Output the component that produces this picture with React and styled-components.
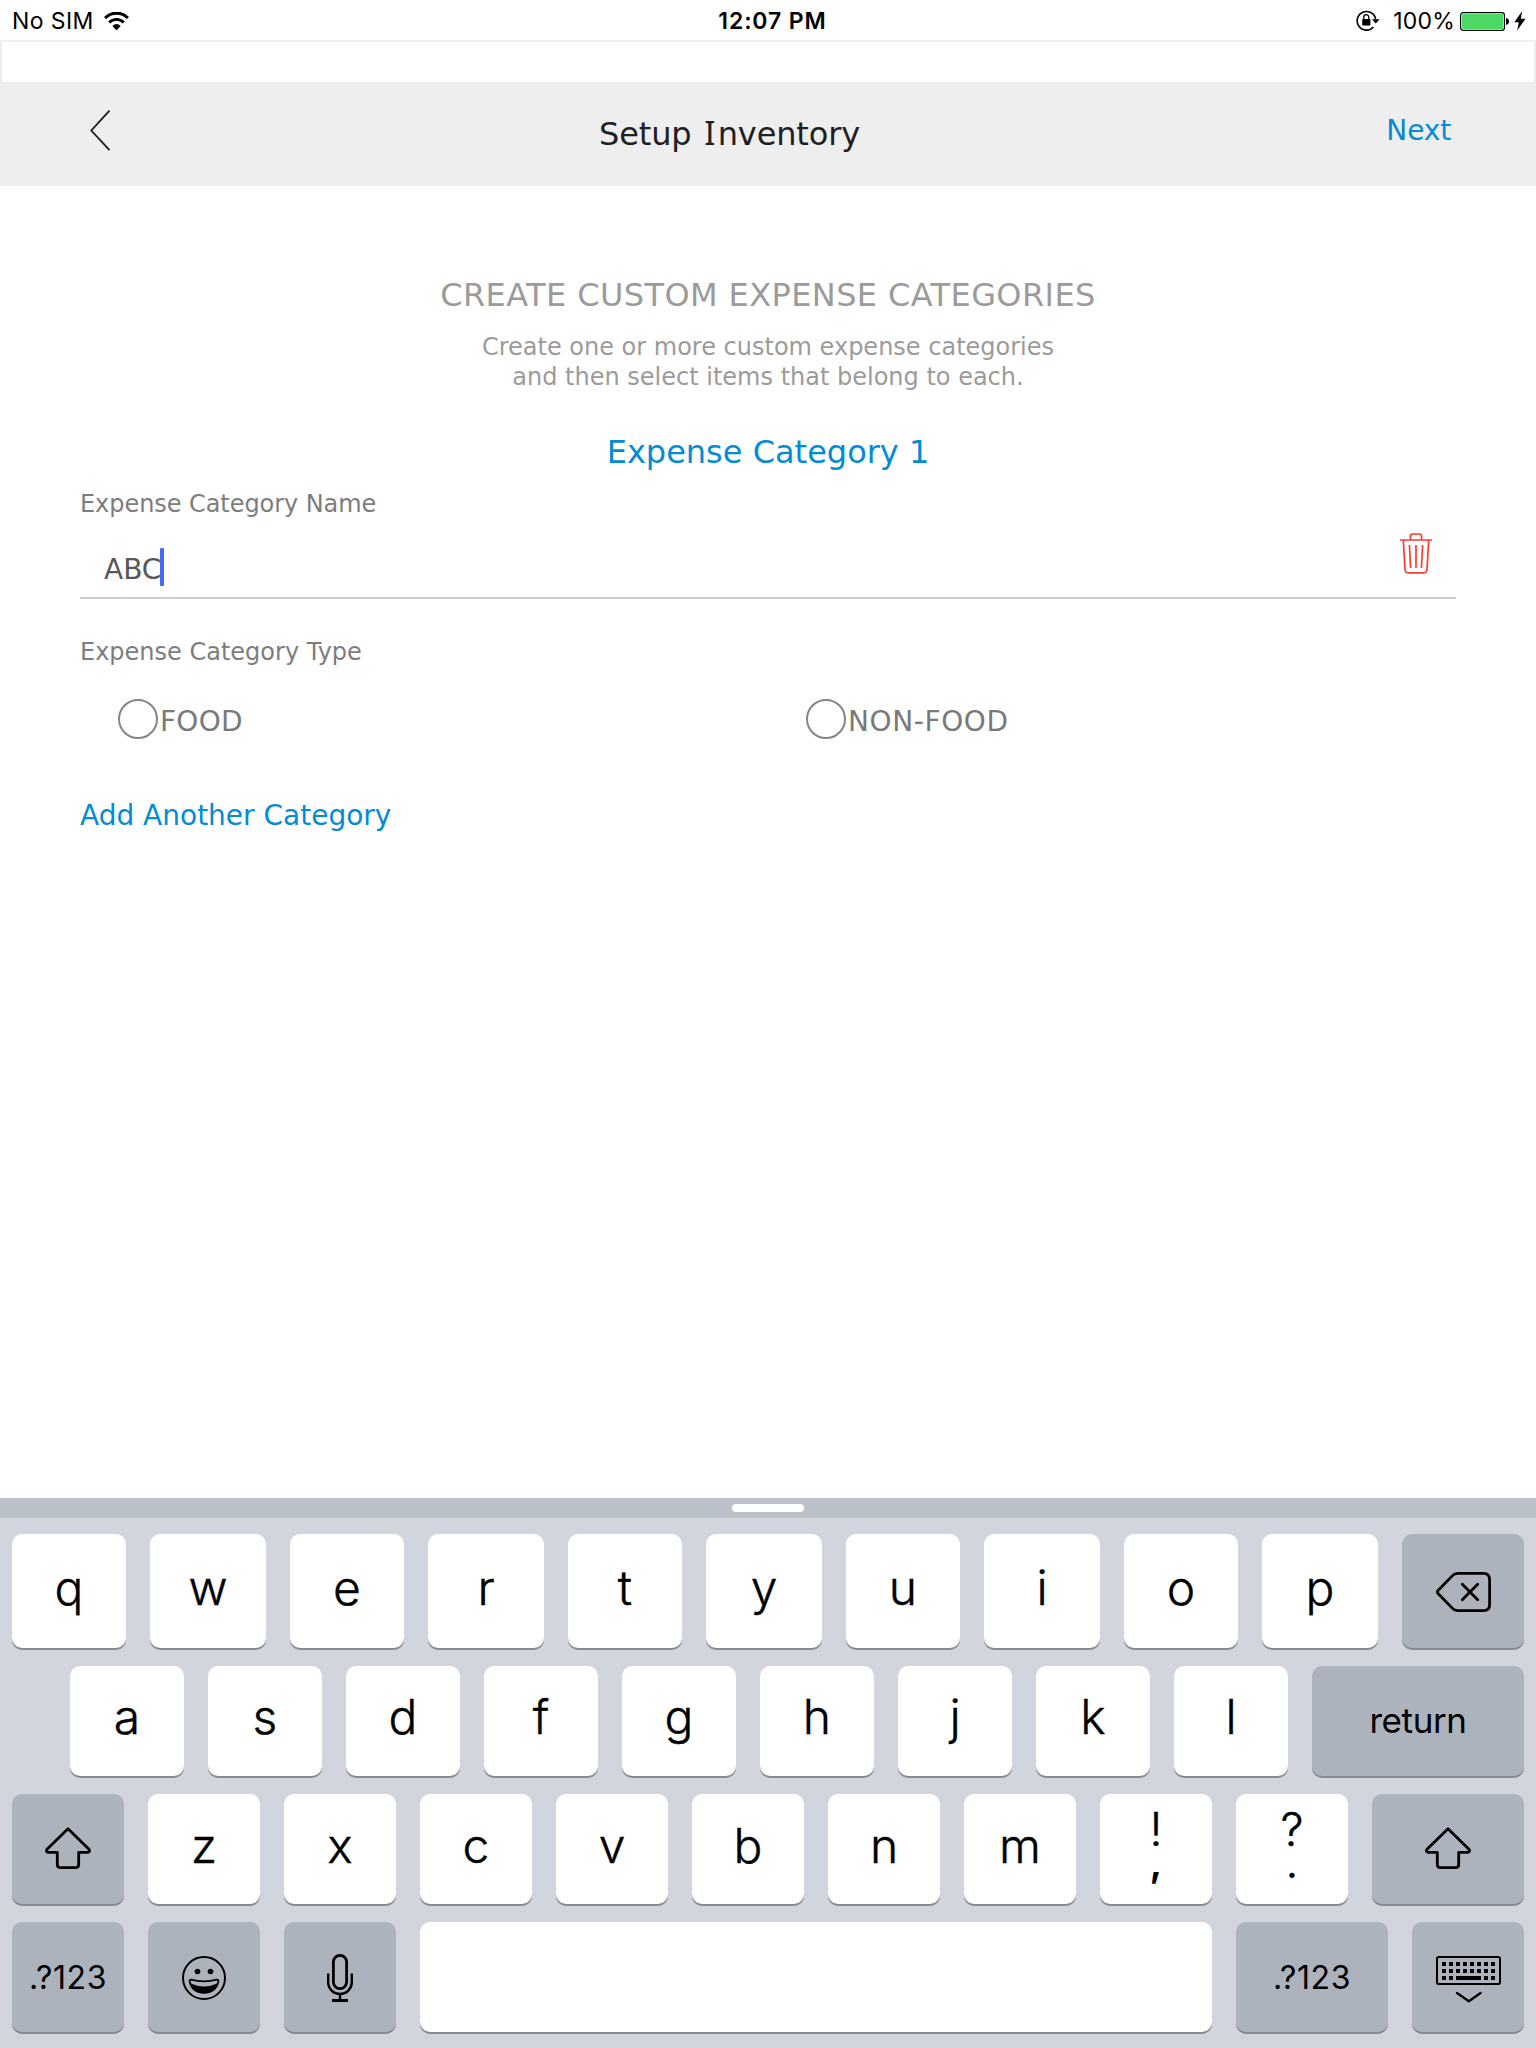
import React from "react";
import styled, { createGlobalStyle } from "styled-components";

const GlobalStyle = createGlobalStyle`
  * { box-sizing: border-box; }
  body { margin: 0; background: #fff; }
  svg { display: block; flex: none; }
`;

const sans = `"DejaVu Sans", Verdana, sans-serif`;
const system = `Inter, "Liberation Sans", sans-serif`;

const Page = styled.div`
  width: 1536px;
  height: 2048px;
  display: flex;
  flex-direction: column;
  background: #fff;
  font-family: ${sans};
  overflow: hidden;
`;

/* Status bar */
const StatusBar = styled.div`
  height: 40px;
  display: grid;
  grid-template-columns: 1fr auto 1fr;
  align-items: center;
  padding: 1px 10px 0 12px;
  font: 400 23px/40px ${system};
  color: #000;
`;
const StatusLeft = styled.div`
  display: flex;
  align-items: center;
  gap: 10px;
  letter-spacing: 0.42px;
`;
const StatusTime = styled.div`
  font-weight: 600;
  letter-spacing: 0.9px;
  padding-left: 7px;
`;
const StatusRight = styled.div`
  display: flex;
  align-items: center;
  justify-content: flex-end;
`;
const Percent = styled.span`
  margin: 0 5px 0 13px;
  letter-spacing: 0.2px;
`;
const Charging = styled.span`
  padding-left: 4px;
`;

/* Header */
const EmptyBar = styled.div`
  height: 42px;
  border: 2px solid #eee;
  border-bottom: 0;
`;
const Header = styled.header`
  height: 104px;
  display: flex;
  align-items: center;
  background: #eee;
`;
const BackButton = styled.div`
  width: 110px;
  padding: 0 0 7px 90px;
`;
const Title = styled.div`
  flex: 1;
  text-align: center;
  font-size: 32px;
  line-height: 40px;
  letter-spacing: -0.15px;
  color: #1f2023;
  white-space: nowrap;
`;
const SerifCapital = styled.span`
  font: 33px/1 "Noto Sans", sans-serif;
  margin: 0 2.5px 0 2.7px;
`;
const NextLink = styled.div`
  width: 187px;
  padding: 0 85px 6px 0;
  text-align: right;
  font-size: 28px;
  line-height: 40px;
  letter-spacing: -0.15px;
  color: #038bd4;
`;

/* Form */
const Content = styled.main`
  flex: 1;
  padding: 89px 80px 0;
`;
const Heading = styled.h1`
  margin: 0 0 17px;
  text-align: center;
  font-size: 32px;
  font-weight: 400;
  line-height: 40px;
  letter-spacing: 0.4px;
  color: #9b9b9b;
`;
const Intro = styled.p`
  margin: 0 0 40px;
  text-align: center;
  font-size: 24px;
  line-height: 30px;
  color: #9b9b9b;
`;
const CategoryTitle = styled.h2`
  margin: 0 0 17px;
  text-align: center;
  font-size: 32px;
  font-weight: 400;
  line-height: 40px;
  color: #038bd4;
`;
const Label = styled.div`
  font-size: 24px;
  line-height: 30px;
  letter-spacing: ${(p) => p.$spacing || "0"};
  color: #7d7d7d;
`;
const Field = styled.div`
  height: 80px;
  display: flex;
  align-items: flex-start;
  margin-bottom: 38px;
  padding: 0 24px;
  border-bottom: 2px solid #ccc;
`;
const FieldText = styled.span`
  padding-top: 31px;
  font-size: 28px;
  line-height: 40px;
  color: #575757;
`;
const Caret = styled.span`
  width: 4px;
  height: 38px;
  margin: 29px auto 0 -1px;
  border-radius: 1px;
  background: #426bf2;
`;
const TrashButton = styled.div`
  padding-top: 14px;
`;
const Options = styled.div`
  height: 40px;
  display: flex;
  margin: 32px 0 57px;
`;
const Option = styled.div`
  width: 688px;
  padding-left: 38px;
  display: flex;
  align-items: center;
  font-size: 28px;
  letter-spacing: ${(p) => p.$spacing};
  color: #797979;
`;
const Radio = styled.span`
  width: 40px;
  height: 40px;
  margin-right: 2px;
  border: 2px solid #858585;
  border-radius: 50%;
`;
const OptionText = styled.span`
  line-height: 40px;
  padding-top: 6px;
`;
const AddLink = styled.div`
  font-size: 28px;
  line-height: 40px;
  color: #038bd4;
`;

/* Keyboard */
const Keyboard = styled.div`
  height: 550px;
  background: #d2d5dd;
`;
const Handle = styled.div`
  height: 20px;
  display: flex;
  justify-content: center;
  padding-top: 6px;
  background: #bac1c9;
`;
const Grip = styled.div`
  width: 72px;
  height: 8px;
  border-radius: 4px;
  background: #fff;
`;
const Rows = styled.div`
  display: flex;
  flex-direction: column;
  gap: 18px;
  padding-top: 16px;
`;
const Row = styled.div`
  display: flex;
  gap: 24px;
  height: ${(p) => p.$height || 110}px;
  padding: 0 12px 0 ${(p) => p.$indent || 12}px;
`;
const Key = styled.div`
  width: ${(p) => p.$width}px;
  height: 100%;
  display: flex;
  flex-direction: column;
  align-items: center;
  justify-content: ${(p) => (p.$stacked ? "flex-start" : "center")};
  padding-top: ${(p) => (p.$stacked ? 7 : 0)}px;
  border-radius: 10px;
  background: ${(p) => (p.$dark ? "#adb3bd" : "#fff")};
  box-shadow: 0 2px 0 #898a8d;
  color: #000;
  font-family: ${system};
`;
const Letter = styled.span`
  padding-bottom: ${(p) => p.$raise}px;
  font-size: 48px;
  font-weight: 300;
  line-height: 60px;
  -webkit-text-stroke: 0.4px #000;
`;
const ReturnText = styled.span`
  padding-bottom: 3px;
  font-size: 35px;
  line-height: 44px;
  letter-spacing: -0.4px;
`;
const ModeText = styled.span`
  padding-top: 2px;
  font-size: 32px;
  line-height: 40px;
  letter-spacing: 0.6px;
`;
const UpperMark = styled.span`
  font-size: 46px;
  font-weight: 300;
  line-height: 56px;
  -webkit-text-stroke: 0.4px #000;
`;
const LowerMark = styled.span`
  margin-top: ${(p) => p.$lift}px;
  font-size: ${(p) => p.$size}px;
  font-weight: 600;
  line-height: 30px;
`;
const IconBox = styled.span`
  padding: ${(p) => p.$pad || 0};
`;

const WifiIcon = () => (
  <svg width="26" height="19" viewBox="0 0 26 19" fill="none" stroke="#000">
    <path d="M1.1 6.1a15.6 15.6 0 0 1 22.8 0" strokeWidth="3" />
    <path d="M5.2 10.4a10.2 10.2 0 0 1 14.6 0" strokeWidth="2.8" />
    <path d="M8.3 14Q12.5 10 16.7 14L12.5 18.2z" fill="#000" stroke="none" />
  </svg>
);
const LockIcon = () => (
  <svg width="24" height="22" viewBox="0 0 24 22" fill="none" stroke="#000">
    <path d="M17.4 17A9.3 9.3 0 1 1 19.600 9" strokeWidth="1.600" />
    <path d="M16 9.200h7.600l-3.800 4.200z" fill="#000" stroke="none" />
    <rect x="6.200" y="9" width="8.200" height="6.600" rx="0.800" fill="#000" stroke="none" />
    <path d="M7.800 9V7.200a2.500 2.500 0 0 1 5 0V9" strokeWidth="1.300" />
  </svg>
);
const BatteryIcon = () => (
  <svg width="50" height="19" viewBox="0 0 50 19">
    <rect x="0.6" y="0.6" width="43.8" height="17.8" rx="2.6" fill="#fff" stroke="#000" strokeWidth="1.2" />
    <rect x="2" y="2" width="41" height="15" rx="1" fill="#4cd964" />
    <path d="M46 6c2 .4 3 1.600 3 3.500s-1 3.100-3 3.500z" fill="#000" />
  </svg>
);
const BoltIcon = () => (
  <svg width="12" height="20" viewBox="0 0 12 20">
    <path d="M8.200 0L.3 11.200h4.500L3.200 19.500 11.500 7.700H6.800z" />
  </svg>
);
const BackIcon = () => (
  <svg width="21" height="41" viewBox="0 0 21 41" fill="none" stroke="#1b1b1d" strokeWidth="1.8">
    <path d="M19.500.7L1.300 20.500 19.500 40.200" />
  </svg>
);
const TrashIcon = () => (
  <svg width="32" height="41" viewBox="0 0 32 41" fill="none" stroke="#ff3b30" strokeWidth="1.7">
    <path d="M0 7h32M10.500 7V2.800Q10.500 1 12.300 1h7.400Q21.500 1 21.500 2.800V7" />
    <path d="M3.300 7L5 36.500Q5.300 39.800 8 39.800h16q2.700 0 3-3.300L28.700 7" />
    <path d="M9.400 12L10.600 35M16 12v23M22.600 12L21.400 35" />
  </svg>
);
const DeleteIcon = () => (
  <svg width="56" height="40" viewBox="0 0 56 40" fill="none" stroke="#000" strokeWidth="2.800" strokeLinejoin="round" strokeLinecap="round">
    <path d="M1.800 18.800L16.500 3.600Q18.600 1.400 21.500 1.400H47.500Q53.600 1.400 53.600 7.500V32.500Q53.600 38.600 47.500 38.600H21.500Q18.600 38.600 16.500 36.400L1.800 21.200Q.8 20 1.800 18.800z" />
    <path d="M26.300 12.300l15.400 15.400M41.700 12.300L26.300 27.700" />
  </svg>
);
const ShiftIcon = () => (
  <svg width="46" height="42" viewBox="0 0 46 42" fill="none" stroke="#000" strokeWidth="2.800" strokeLinejoin="round">
    <path d="M23 1.700L44.200 22.600Q45.300 25 43 25.300H33.700V37.600Q33.700 40.600 30.700 40.600H15.300Q12.300 40.600 12.300 37.600V25.300H3Q.7 25 1.800 22.600z" />
  </svg>
);
const EmojiIcon = () => (
  <svg width="44" height="44" viewBox="0 0 44 44" fill="none" stroke="#000">
    <circle cx="22" cy="22" r="21" strokeWidth="2" />
    <circle cx="15.500" cy="15.500" r="2.800" fill="#000" stroke="none" />
    <circle cx="28.500" cy="15.500" r="2.800" fill="#000" stroke="none" />
    <path d="M9 23.600Q22 27.200 35 23.600 36.800 23.600 36.300 26 33.500 36.800 22 36.800T7.700 26Q7.200 23.600 9 23.600z" strokeWidth="1.800" />
    <path d="M8.800 27.500Q22 33.600 35.200 27.500 32 36.500 22 36.500T8.800 27.500z" fill="#000" stroke="none" />
  </svg>
);
const MicIcon = () => (
  <svg width="26" height="48" viewBox="0 0 26 48" fill="none" stroke="#000">
    <rect x="6.400" y="1.400" width="13.200" height="33.200" rx="6.600" strokeWidth="2.800" />
    <path d="M1.200 19.500v8.700a11.800 11.800 0 0 0 23.600 0v-8.700" strokeWidth="2.400" />
    <path d="M13 40v6" strokeWidth="2.400" />
    <path d="M5 46.500h16" strokeWidth="3" />
  </svg>
);
const gridRows = [
  [6, 13, 20, 27, 34, 41, 48, 55].map((x) => [x, 6]),
  [6, 13, 20, 27, 34, 41, 48, 55].map((x) => [x, 13]),
  [6, 13, 48, 55].map((x) => [x, 20]),
].flat();
const HideKeyboardIcon = () => (
  <svg width="65" height="47" viewBox="0 0 65 47">
    <rect x="1" y="1" width="63" height="27" rx="1.800" fill="none" stroke="#000" strokeWidth="2" />
    {gridRows.map(([x, y]) => (
      <rect key={`${x}-${y}`} x={x} y={y} width="4" height="4" />
    ))}
    <rect x="20" y="20" width="25" height="4" />
    <path d="M21 37l11.800 8.300L44.600 37" fill="none" stroke="#000" strokeWidth="2.300" strokeLinecap="round" strokeLinejoin="round" />
  </svg>
);

const LetterKeys = ({ letters, widths, raise = 6 }) =>
  letters.split("").map((l, i) => (
    <Key key={l} $width={widths[i % widths.length]}>
      <Letter $raise={raise}>{l}</Letter>
    </Key>
  ));

export default function App() {
  return (
    <Page>
      <GlobalStyle />
      <StatusBar>
        <StatusLeft>
          No SIM
          <WifiIcon />
        </StatusLeft>
        <StatusTime>12:07 PM</StatusTime>
        <StatusRight>
          <LockIcon />
          <Percent>100%</Percent>
          <BatteryIcon />
          <Charging>
            <BoltIcon />
          </Charging>
        </StatusRight>
      </StatusBar>
      <EmptyBar />
      <Header>
        <BackButton>
          <BackIcon />
        </BackButton>
        <Title>
          Setup <SerifCapital>I</SerifCapital>nventory
        </Title>
        <NextLink>Next</NextLink>
      </Header>
      <Content>
        <Heading>CREATE CUSTOM EXPENSE CATEGORIES</Heading>
        <Intro>
          Create one or more custom expense categories
          <br />
          and then select items that belong to each.
        </Intro>
        <CategoryTitle>Expense Category 1</CategoryTitle>
        <Label $spacing="-0.06px">Expense Category Name</Label>
        <Field>
          <FieldText>ABC</FieldText>
          <Caret />
          <TrashButton>
            <TrashIcon />
          </TrashButton>
        </Field>
        <Label>Expense Category Type</Label>
        <Options>
          <Option $spacing="0.25px">
            <Radio />
            <OptionText>FOOD</OptionText>
          </Option>
          <Option $spacing="0.6px">
            <Radio />
            <OptionText>NON-FOOD</OptionText>
          </Option>
        </Options>
        <AddLink>Add Another Category</AddLink>
      </Content>
      <Keyboard>
        <Handle>
          <Grip />
        </Handle>
        <Rows>
          <Row $height={114}>
            <LetterKeys letters="qwertyuiop" widths={[114, 116]} />
            <Key $width={122} $dark>
              <IconBox $pad="2px 0 0 2px">
                <DeleteIcon />
              </IconBox>
            </Key>
          </Row>
          <Row $indent={70}>
            <LetterKeys letters="asdfghjkl" widths={[114]} raise={8} />
            <Key $width={212} $dark>
              <ReturnText>return</ReturnText>
            </Key>
          </Row>
          <Row>
            <Key $width={112} $dark>
              <IconBox $pad="0 0 2px">
                <ShiftIcon />
              </IconBox>
            </Key>
            <LetterKeys letters="zxcvbnm" widths={[112]} />
            <Key $width={112} $stacked>
              <UpperMark>!</UpperMark>
              <LowerMark $size={40} $lift={-10}>,</LowerMark>
            </Key>
            <Key $width={112} $stacked>
              <UpperMark>?</UpperMark>
              <LowerMark $size={34} $lift={-6}>.</LowerMark>
            </Key>
            <Key $width={152} $dark>
              <IconBox $pad="0 0 2px">
                <ShiftIcon />
              </IconBox>
            </Key>
          </Row>
          <Row>
            <Key $width={112} $dark>
              <ModeText>.?123</ModeText>
            </Key>
            <Key $width={112} $dark>
              <IconBox $pad="2px 0 0">
                <EmojiIcon />
              </IconBox>
            </Key>
            <Key $width={112} $dark>
              <IconBox $pad="2px 0 0">
                <MicIcon />
              </IconBox>
            </Key>
            <Key $width={792} />
            <Key $width={152} $dark>
              <ModeText>.?123</ModeText>
            </Key>
            <Key $width={112} $dark>
              <IconBox $pad="5px 0 0">
                <HideKeyboardIcon />
              </IconBox>
            </Key>
          </Row>
        </Rows>
      </Keyboard>
    </Page>
  );
}
